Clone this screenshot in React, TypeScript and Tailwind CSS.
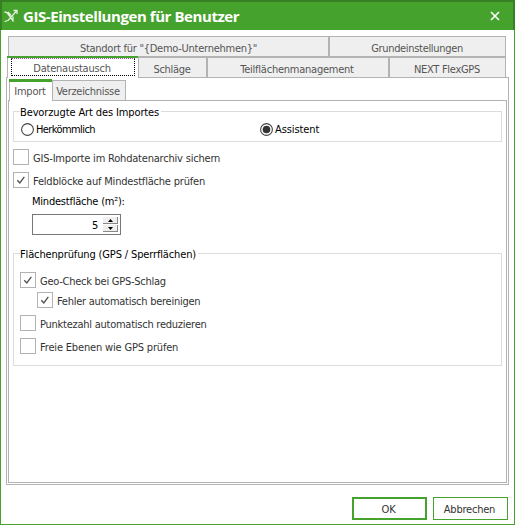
import type { ReactNode } from 'react';
import clsx from 'clsx';

function Checkbox({ checked, label, className }: { checked?: boolean; label: string; className?: string }) {
  return (
    <label className={clsx('flex h-4 items-center whitespace-nowrap text-[#333333]', className)}>
      <span className="mr-1 flex h-4 w-4 shrink-0 items-center justify-center border border-[#b3b3b3] bg-white">
        {checked && (
          <svg width="14" height="14" viewBox="0 0 14 14" fill="none" stroke="#505050" strokeWidth="1.3">
            <path d="M3.3 7.2 L5.8 10 L10.3 3.8" />
          </svg>
        )}
      </span>
      <span className="pt-[4px]">{label}</span>
    </label>
  );
}

function Radio({ checked, children, className }: { checked?: boolean; children: ReactNode; className?: string }) {
  return (
    <label className={clsx('flex items-center whitespace-nowrap', className)}>
      <svg className="mr-[2px] shrink-0" width="13" height="13" viewBox="0 0 13 13">
        <circle cx="6.5" cy="6.5" r="5.9" fill="#fff" stroke="#444" strokeWidth="1.1" />
        {checked && <circle cx="6.5" cy="6.5" r="3.8" fill="#333" />}
      </svg>
      <span className="pt-[1px]">{children}</span>
    </label>
  );
}

function Group({ title, titleClass, className, children }: { title: string; titleClass: string; className: string; children: ReactNode }) {
  return (
    <div className={clsx('relative ml-1 w-[489px] border border-[#dcdcdc]', className)}>
      <span className={clsx('absolute -top-[7px] left-[6px] bg-white leading-4 whitespace-nowrap', titleClass)}>{title}</span>
      {children}
    </div>
  );
}

function Tab({ children, className }: { children: ReactNode; className: string }) {
  return (
    <div className={clsx('flex shrink-0 items-center justify-center whitespace-nowrap border-[#b3b3b3] text-[#555555]', className)}>
      {children}
    </div>
  );
}

export default function App() {
  return (
    <div className="flex h-[525px] w-[515px] flex-col overflow-hidden bg-white font-['DejaVu_Sans_Condensed','DejaVu_Sans',sans-serif] text-[11px] leading-4 tracking-[-0.22px] text-black">
      <header className="flex h-[30px] shrink-0 items-center border-x-2 border-t-2 border-[#378023] bg-[#45a22c] text-white">
        <svg className="ml-[2px] shrink-0" width="15" height="14" viewBox="0 0 15 14" fill="none" stroke="#e4f2df" strokeWidth="1.3">
          <path d="M0.5 3 L3 3.5 L9.5 12.5 M4 3 L7 6.5 M9 7.5 V12.5 M0.5 12.5 L4 11.5 L12.5 2 M9.5 1.5 H13 V5" />
        </svg>
        <h1 className="ml-1 whitespace-nowrap font-['Open_Sans',sans-serif] text-[15px] leading-5 font-bold tracking-[-0.43px]">GIS-Einstellungen für Benutzer</h1>
        <svg className="mr-[13px] ml-auto" width="10" height="10" viewBox="0 0 10 10" stroke="#fff" strokeWidth="1.6">
          <path d="M1 1 L9 9 M9 1 L1 9" />
        </svg>
      </header>

      <main className="flex flex-1 flex-col border-x border-b border-[#45a22c] pt-[6px] pl-[5px]">
        <div className="ml-[2px] flex h-[20px] w-[498px] shrink-0 border border-b-0 border-[#b3b3b3] bg-[#efefef]">
          <Tab className="w-[321px] border-r-2 pt-[5px] tracking-[-0.26px]">Standort für "{'{'}Demo-Unternehmen{'}'}"</Tab>
          <Tab className="flex-1 pt-[5px] pr-[1px] tracking-[-0.32px]">Grundeinstellungen</Tab>
        </div>
        <div className="relative z-10 ml-[1px] flex h-[21px] w-[499px] shrink-0 bg-[#efefef]">
          <div className="h-[22px] w-[131px] shrink-0 border-t-2 border-[#45a22c] bg-white">
            <div className="h-[20px] border-l border-[#b3b3b3] pl-[3px]">
              <div className="flex h-[18px] w-[124px] items-center justify-center border border-dotted border-black border-t-[#a64ca6] pr-[2px] pt-[3px] text-[#555555]">
                Datenaustausch
              </div>
            </div>
          </div>
          <Tab className="w-[70px] border-t-2 border-r-2 border-l pt-[4px] pr-[1px] tracking-[-0.3px]">Schläge</Tab>
          <Tab className="w-[182px] border-t-2 border-r-2 pt-[4px] pr-[2px] tracking-[-0.24px]">Teilflächenmanagement</Tab>
          <Tab className="flex-1 border-t-2 border-r pt-[4px] pr-[1px] tracking-[-0.3px]">NEXT FlexGPS</Tab>
        </div>

        <section className="flex h-[408px] w-[503px] shrink-0 flex-col border border-[#b3b3b3] p-[1px]">
          <div className="relative z-10 ml-[1px] flex h-[21px] shrink-0">
            <div className="h-[22px] w-[43px] border-t-[3px] border-[#45a22c] bg-white">
              <Tab className="h-[19px] border-l pr-[2px]">Import</Tab>
            </div>
            <Tab className="mt-[1px] w-[74px] border border-b-0 bg-[#efefef] pt-[3px] pr-[2px] tracking-[-0.28px]">Verzeichnisse</Tab>
          </div>

          <div className="flex flex-1 flex-col border border-[#b3b3b3]">
            <Group title="Bevorzugte Art des Importes" titleClass="w-[141px] tracking-[-0.12px]" className="mt-[10px] flex h-[31px] shrink-0 items-center pt-[5px]">
              <Radio className="ml-[7px] w-[239px] tracking-[-0.6px]">Herkömmlich</Radio>
              <Radio checked className="tracking-[-0.1px]">Assistent</Radio>
            </Group>

            <Checkbox className="mt-[7px] ml-1 tracking-[-0.2px]" label="GIS-Importe im Rohdatenarchiv sichern" />
            <Checkbox className="mt-[7px] ml-1 tracking-[-0.2px]" checked label="Feldblöcke auf Mindestfläche prüfen" />
            <div className="mt-[6px] ml-[23px]">Mindestfläche (m²):</div>

            <div className="mt-[4px] ml-[23px] flex h-[21px] w-[89px] shrink-0 items-center border border-[#777777]">
              <span className="flex-1 pt-[2px] pr-[5px] text-right">5</span>
              <div className="mr-[2px] flex w-[15px] flex-col gap-[1px]">
                <span className="flex h-[7px] items-center justify-center border-r border-b border-[#888888] bg-[#efefef]">
                  <svg width="5" height="3" viewBox="0 0 5 3"><path d="M0 3 L2.5 0 L5 3 Z" /></svg>
                </span>
                <span className="flex h-[7px] items-center justify-center border-r border-b border-[#888888] bg-[#efefef]">
                  <svg width="5" height="3" viewBox="0 0 5 3"><path d="M0 0 L2.5 3 L5 0 Z" /></svg>
                </span>
              </div>
            </div>

            <Group title="Flächenprüfung (GPS / Sperrflächen)" titleClass="w-[178px] tracking-[-0.14px]" className="mt-[18px] h-[113px] shrink-0 pt-[18px] pl-[6px]">
              <Checkbox checked label="Geo-Check bei GPS-Schlag" className="tracking-[-0.26px]" />
              <Checkbox className="mt-[4px] ml-[17px] tracking-[-0.26px]" checked label="Fehler automatisch bereinigen" />
              <Checkbox className="mt-[7px] tracking-[-0.25px]" label="Punktezahl automatisch reduzieren" />
              <Checkbox className="mt-[7px] tracking-[-0.17px]" label="Freie Ebenen wie GPS prüfen" />
            </Group>
          </div>
        </section>

        <footer className="mt-3 mr-[6px] flex shrink-0 justify-end gap-[6px] text-[#333333]">
          <button className="h-[23px] w-[75px] border-2 border-[#45a22c] bg-white pt-[2px] pr-[2px]">OK</button>
          <button className="h-[23px] w-[75px] border border-[#45a22c] bg-white pt-[2px] pr-[2px]">Abbrechen</button>
        </footer>
      </main>
    </div>
  );
}
